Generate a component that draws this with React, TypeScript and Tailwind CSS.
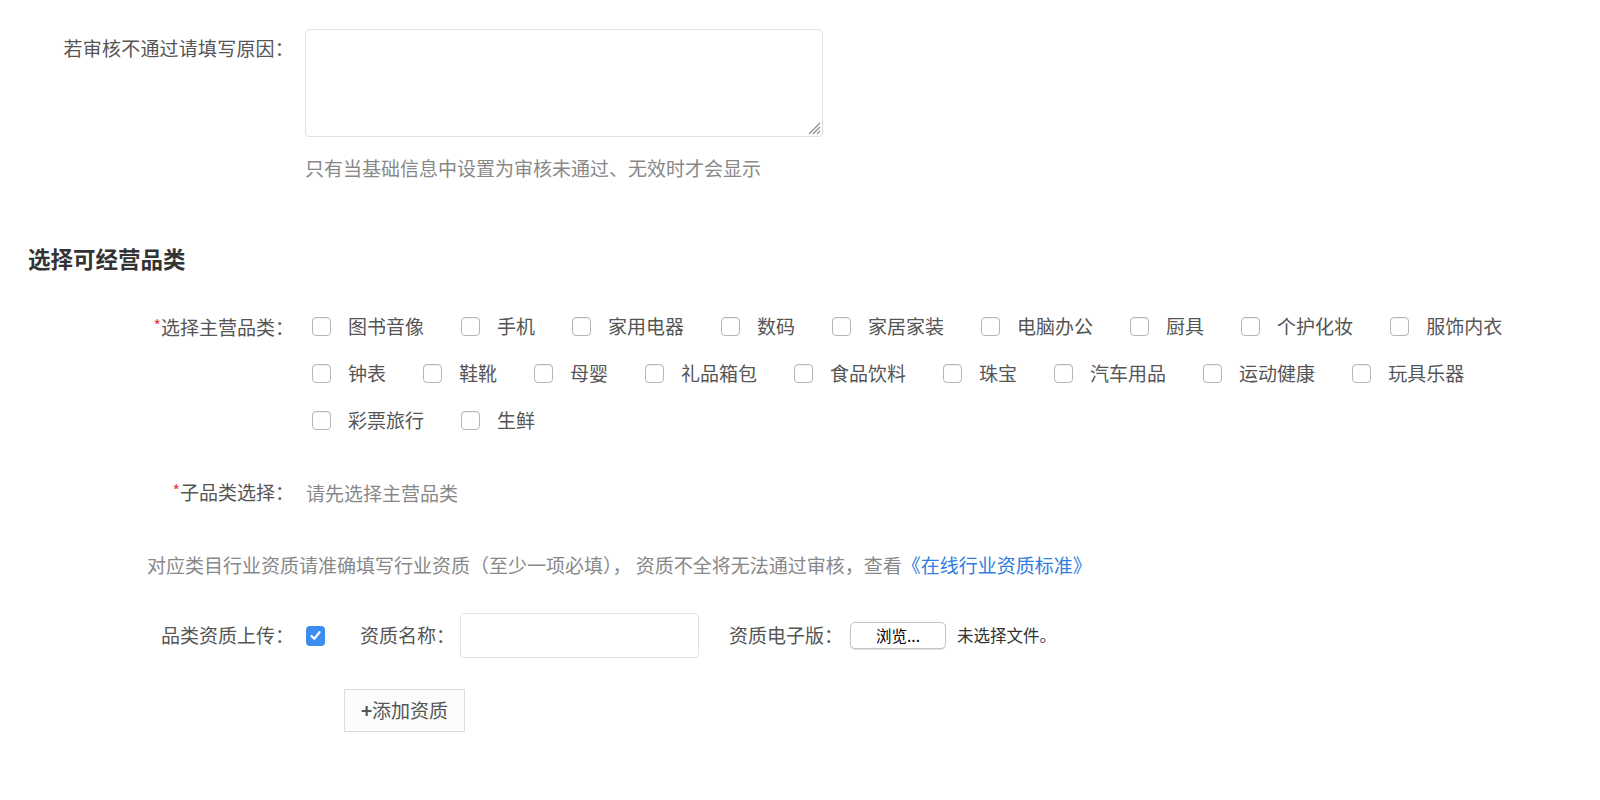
import React from "react";

const row1 = ["图书音像", "手机", "家用电器", "数码", "家居家装", "电脑办公", "厨具", "个护化妆", "服饰内衣"];
const row2 = ["钟表", "鞋靴", "母婴", "礼品箱包", "食品饮料", "珠宝", "汽车用品", "运动健康", "玩具乐器"];
const row3 = ["彩票旅行", "生鲜"];
const cats = [...row1, ...row2, ...row3];

function Box() {
  return (
    <span className="inline-block w-[19px] h-[19px] rounded-[4px] border border-[#b5b5b5] bg-white shadow-[inset_0_1px_1px_rgba(0,0,0,0.06)] shrink-0" />
  );
}

function CheckedBox() {
  return (
    <span className="flex items-center justify-center w-[19px] h-[20px] rounded-[4px] bg-[#3b8ef0] shrink-0">
      <svg width="13" height="13" viewBox="0 0 13 13">
        <path d="M2.5 7 L5.3 9.8 L10.5 3.2" stroke="white" strokeWidth="2.2" fill="none" strokeLinecap="round" strokeLinejoin="round" />
      </svg>
    </span>
  );
}

function Star() {
  return <span className="relative top-[-3px] text-[#e4393c] text-[16px]">*</span>;
}

export default function App() {
  return (
    <div className="min-h-screen bg-white text-[#555] text-[19px] font-['Noto_Sans_CJK_SC','Noto_Sans',sans-serif]">
      <div className="pt-[29px]">
        {/* reason */}
        <div className="flex items-start">
          <div className="w-[294px] text-right leading-[38px] shrink-0 tracking-[0.2px]">若审核不通过请填写原因：</div>
          <div className="relative ml-[11px] w-[518px] h-[108px] rounded-[4px] border border-[#dde3e5] bg-white">
            <svg className="absolute right-[1px] bottom-[1px]" width="17" height="17" viewBox="0 0 17 17">
              <path d="M16 5 L5 16 M16 9 L9 16 M16 13 L13 16" stroke="#8f8f8f" strokeWidth="1.3" />
            </svg>
          </div>
        </div>
        <div className="ml-[305px] mt-[18px] leading-[26px] text-[#888]">只有当基础信息中设置为审核未通过、无效时才会显示</div>

        {/* heading */}
        <div className="ml-[28px] mt-[62px] leading-[30px] text-[22.5px] font-bold text-[#333]">选择可经营品类</div>

        {/* categories */}
        <div className="flex items-start mt-[30px]">
          <div className="w-[294px] text-right leading-[47px] shrink-0">
            <Star />选择主营品类：
          </div>
          <div className="ml-[18px] w-[1280px] flex flex-wrap">
            {cats.map((c) => (
              <label key={c} className="flex items-center h-[47px] mr-[37px]">
                <Box />
                <span className="ml-[17px]">{c}</span>
              </label>
            ))}
          </div>
        </div>

        {/* sub category */}
        <div className="flex items-center mt-[24px] leading-[47px]">
          <div className="w-[294px] text-right shrink-0">
            <Star />子品类选择：
          </div>
          <div className="ml-[12px] text-[#888]">请先选择主营品类</div>
        </div>

        {/* notice */}
        <div className="ml-[147px] mt-[24px] leading-[47px] text-[#888]">
          对应类目行业资质请准确填写行业资质（至少一项必填），&nbsp;资质不全将无法通过审核，查看
          <a className="text-[#2f7de1]">《在线行业资质标准》</a>
        </div>

        {/* upload */}
        <div className="flex items-center mt-[25px] h-[45px]">
          <div className="w-[294px] text-right shrink-0">品类资质上传：</div>
          <div className="ml-[12px]">
            <CheckedBox />
          </div>
          <div className="ml-[35px]">资质名称：</div>
          <div className="ml-[5px] w-[239px] h-[45px] rounded-[4px] border border-[#dde3e5] bg-white" />
          <div className="ml-[30px]">资质电子版：</div>
          <div className="ml-[7px] w-[96px] h-[27px] rounded-[5px] border border-[#c4c4c4] bg-white shadow-[0_1px_1px_rgba(0,0,0,0.12)] flex items-center justify-center text-[15.5px] text-black">
            浏览...
          </div>
          <div className="ml-[11px] text-[16.5px] text-[#333]">未选择文件。</div>
        </div>

        {/* add */}
        <div className="ml-[344px] mt-[31px] w-[121px] h-[43px] border border-[#dddddd] bg-[#fcfcfc] flex items-center justify-center text-[#555]">
          <span className="font-bold">+</span>添加资质
        </div>
      </div>
    </div>
  );
}
